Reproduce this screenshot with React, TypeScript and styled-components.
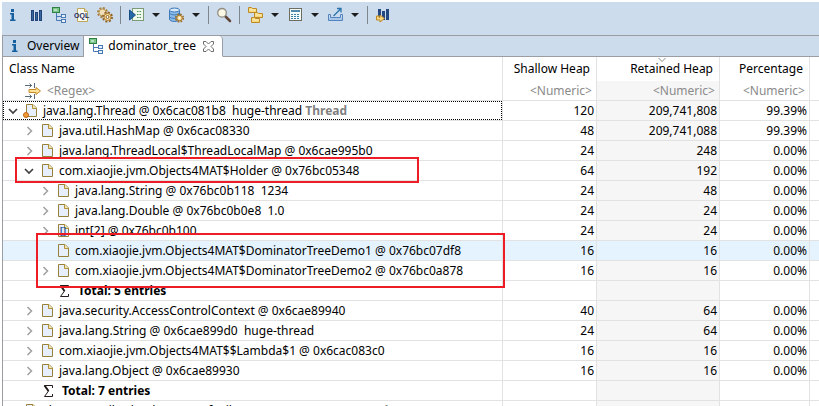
import React from "react";
import styled, { createGlobalStyle, css } from "styled-components";

const GlobalStyle = createGlobalStyle`
  * { box-sizing: border-box; }
  body {
    margin: 0;
    background: #fff;
    color: #000;
    font-family: "Noto Sans", "Open Sans", sans-serif;
    font-size: 12px;
  }
`;

const Window = styled.div`
  display: flex;
  flex-direction: column;
  height: 100vh;
  padding: 2px 0 0 2px;
  overflow: hidden;
`;

const Toolbar = styled.div`
  display: flex;
  flex: none;
  align-items: center;
  gap: 7px;
  height: 33px;
  padding: 0 3px 7px;
  background: #cddcec;
`;

const ToolButton = styled.button<{ $narrow?: boolean }>`
  display: flex;
  flex: none;
  align-items: center;
  justify-content: center;
  width: ${(p) => (p.$narrow ? 10 : 16)}px;
  height: 18px;
  padding: 0;
  border: 0;
  background: none;
`;

const Separator = styled.span`
  width: 1px;
  height: 18px;
  background: #7f858c;
`;

const TabBar = styled.div`
  display: flex;
  flex: none;
  height: 22px;
  border-top: 1px solid #9a9da1;
  border-left: 1px solid #9a9da1;
  background: #cddcec;
`;

const Tab = styled.button<{ $active?: boolean }>`
  display: flex;
  flex: none;
  align-items: center;
  gap: 4px;
  padding: 0 4px;
  border: 0;
  border-right: 1px solid #9a9da1;
  border-bottom: 1px solid #9a9da1;
  background: #c5d6e9;
  color: #000;
  font-family: inherit;
  font-size: 12px;
  line-height: 20px;
  ${(p) =>
    p.$active &&
    css`
      padding-right: 6px;
      border-bottom-color: #fff;
      border-top-right-radius: 4px;
      background: #fff;
    `}
`;

const TabFill = styled.div`
  flex: 1;
  border-bottom: 1px solid #9a9da1;
`;

const Content = styled.div`
  position: relative;
  flex: 1;
  min-height: 0;
  overflow: hidden;
  border-left: 1px solid #9a9da1;
`;

const Table = styled.table`
  width: 100%;
  table-layout: fixed;
  border-collapse: separate;
  border-spacing: 0;
`;

const NumCol = styled.col<{ $width: number }>`
  width: ${(p) => p.$width}px;
`;

const HeadCell = styled.th<{ $left?: boolean }>`
  position: relative;
  height: 24px;
  padding: 0 6px;
  border-right: 1px solid #e2e2e2;
  font-size: 12px;
  font-weight: 400;
  line-height: 24px;
  text-align: ${(p) => (p.$left ? "left" : "right")};
  white-space: nowrap;
`;

const SortMark = styled.svg`
  position: absolute;
  top: 1px;
  left: 50%;
`;

const Cell = styled.td<{ $shaded?: boolean }>`
  height: 20px;
  padding: 0 2px 0 0;
  border-right: 1px solid #e2e2e2;
  border-bottom: 1px solid #e2e2e2;
  background: ${(p) => (p.$shaded ? "#f6f6f6" : "transparent")};
  line-height: 19px;
  text-align: right;
  white-space: nowrap;
`;

const NameCell = styled(Cell)`
  padding: 0;
  text-align: left;
`;

const EndCell = styled(Cell)`
  padding: 0;
  border-right: 0;
`;

const Row = styled.tr<{ $hover?: boolean }>`
  ${(p) =>
    p.$hover &&
    css`
      ${Cell} {
        background: #e5f3ff;
      }
    `}
`;

const NameLine = styled.div<{ $level: number; $focused?: boolean }>`
  display: flex;
  align-items: center;
  height: 19px;
  padding-left: ${(p) => 5 + p.$level * 16}px;
  outline: ${(p) => (p.$focused ? "1px dotted #000" : "none")};
  outline-offset: -1px;
  overflow: hidden;
`;

const Expander = styled.button`
  display: flex;
  flex: none;
  align-items: center;
  width: 10px;
  height: 16px;
  margin-right: 5px;
  padding: 0;
  border: 0;
  background: none;
`;

const ExpanderSpace = styled.span`
  flex: none;
  width: 15px;
`;

const Label = styled.span<{ $total?: boolean }>`
  margin-left: ${(p) => (p.$total ? 7 : 4)}px;
  font-weight: ${(p) => (p.$total ? 700 : 400)};
  white-space: pre;
`;

const Suffix = styled.b`
  color: #7f7f7f;
`;

const FilterLine = styled.div`
  display: flex;
  align-items: center;
  gap: 6px;
  height: 19px;
  padding-left: 22px;
`;

const FilterInput = styled.input<{ $right?: boolean }>`
  display: block;
  width: 100%;
  height: 19px;
  padding: 0 2px 0 0;
  border: 0;
  outline: 0;
  background: transparent;
  font-family: inherit;
  font-size: 12px;
  text-align: ${(p) => (p.$right ? "right" : "left")};
  &::placeholder {
    color: #8a8a8a;
    opacity: 1;
  }
`;

const Marker = styled.div<{ $top: number; $left: number; $width: number; $height: number }>`
  position: absolute;
  top: ${(p) => p.$top}px;
  left: ${(p) => p.$left}px;
  width: ${(p) => p.$width}px;
  height: ${(p) => p.$height}px;
  border: 2px solid #ee1c25;
  pointer-events: none;
`;

const IconSvg = styled.svg`
  flex: none;
  width: 16px;
  height: 16px;
`;

const Icon = ({ children }: { children: React.ReactNode }) => (
  <IconSvg viewBox="0 0 16 16" fill="none" aria-hidden="true">
    {children}
  </IconSvg>
);

const InfoIcon = () => (
  <Icon>
    <path d="M6 2h3v3H6zM5 6h4v6.500h1.500V14H5v-1.500h1.500v-5H5z" fill="#17609f" />
  </Icon>
);

const HistogramIcon = () => (
  <Icon>
    <path d="M3 3h3v11H3zM7 5h3v9H7zM11 3h3v11h-3z" fill="#1f4479" />
    <path d="M4 4h1v9H4zM8 6h1v7H8zM12 4h1v9h-1z" fill="#3a669c" />
  </Icon>
);

const TreeIcon = () => (
  <Icon>
    <path d="M5.500 6v7.500H10M5.500 9.500H10" stroke="#4879b5" />
    <rect x="1.500" y=".5" width="7" height="5" fill="#7cc68c" stroke="#2f8145" />
    <path d="M3 2h3v2H3z" fill="#b5e3be" />
    <rect x="10.500" y="7.500" width="4" height="3" fill="#e7f2fb" stroke="#4879b5" />
    <rect x="10.500" y="12.500" width="4" height="3" fill="#e7f2fb" stroke="#4879b5" />
  </Icon>
);

const OqlIcon = () => (
  <Icon>
    <path d="M3.500 1.500h7l3 3v10h-10z" fill="#fbfaf0" stroke="#bba65c" />
    <path d="M10.500 1.500v3h3" fill="#ead9a0" stroke="#bba65c" />
    <text x="0" y="11" fill="#252c60" fontFamily="Liberation Sans, sans-serif" fontSize="7" fontWeight="700">
      OQL
    </text>
  </Icon>
);

const GearsIcon = () => (
  <Icon>
    <circle cx="5.500" cy="5.500" r="4.500" stroke="#a6803f" strokeWidth="2" strokeDasharray="2 1.500" />
    <circle cx="5.500" cy="5.500" r="3.500" fill="#f0dfb8" stroke="#bb9450" />
    <circle cx="10.500" cy="10" r="4.500" stroke="#8f6429" strokeWidth="2" strokeDasharray="2 1.500" />
    <circle cx="10.500" cy="10" r="3.500" fill="#f5dda1" stroke="#b68234" />
    <circle cx="10.500" cy="10" r="1.500" fill="#fff" stroke="#8f6429" />
  </Icon>
);

const RunReportIcon = () => (
  <Icon>
    <rect x="4.500" y="1.500" width="11" height="12" fill="#eff8ec" stroke="#7a9b74" />
    <path d="M9 4.500h5M9 7.500h5M9 10.500h5" stroke="#4c9257" strokeDasharray="1.500 1" />
    <path d="M1.500 3l6 5-6 5z" fill="#2768a6" stroke="#174f88" />
  </Icon>
);

const DatabaseIcon = () => (
  <Icon>
    <path d="M1.500 3v9c0 1.500 2 2.500 5 2.500s5-1 5-2.500V3" fill="#8bbbe8" stroke="#3d78b8" />
    <ellipse cx="6.500" cy="3" rx="5" ry="2" fill="#d8eafa" stroke="#3d78b8" />
    <path d="M1.500 6c1 2.500 9 2.500 10 0M1.500 9.500c1 2.500 9 2.500 10 0" stroke="#3d78b8" />
    <circle cx="11.500" cy="11" r="3.800" stroke="#9a6c25" strokeWidth="1.600" strokeDasharray="1.700 1.300" />
    <circle cx="11.500" cy="11" r="2.800" fill="#f6d891" stroke="#a87426" />
    <circle cx="11.500" cy="11" r="1" fill="#fff" />
  </Icon>
);

const SearchIcon = () => (
  <Icon>
    <path d="M9.500 9.500l4.500 4.500" stroke="#604738" strokeWidth="2.500" strokeLinecap="round" />
    <circle cx="6" cy="5.800" r="4.300" fill="#fbf8e6" stroke="#928d83" strokeWidth="1.300" />
  </Icon>
);

const FoldersIcon = () => (
  <Icon>
    {[[1, 0], [7, 5], [4, 10]].map(([x, y]) => (
      <g key={x} transform={`translate(${x} ${y})`}>
        <path d="M.5 5.500v-5h3l1 1h4v4z" fill="#f6d77d" stroke="#bc8b28" />
        <path d="M1.500 3h6" stroke="#fff0bd" />
      </g>
    ))}
  </Icon>
);

const CalculatorIcon = () => (
  <Icon>
    <rect x="2.500" y="1.500" width="12" height="12" fill="#f4faf8" stroke="#6e6e60" />
    <path d="M4 3h9v2H4z" fill="#518bab" />
    <path d="M4 7.500h9M4 9.500h9M4 11.500h9" stroke="#3981a8" strokeDasharray="2 1" />
  </Icon>
);

const ExportIcon = () => (
  <Icon>
    <path d="M3.500 7.500h-2v6h14v-6h-2" stroke="#5383bf" />
    <path d="M2 11h13v2H2z" fill="#a9c8e9" />
    <path d="M3.500 7.500v3h10v-3" stroke="#5383bf" />
    <path d="M6.500 9l7-7M10 1.500h4v4" stroke="#2874ae" strokeWidth="1.300" />
  </Icon>
);

const CompareIcon = () => (
  <Icon>
    <path d="M3 2h3v8H3zM7 4h3v9H7zM11 2h3v11h-3z" fill="#244980" />
    <path d="M1.500 9v4H5v2l4.500-3.500L5 8v2.500H4V9z" fill="#f8d883" stroke="#bd8825" />
  </Icon>
);

const FilterIcon = () => (
  <Icon>
    <path d="M0 2.500h7M0 13.500h7M4.500.5l2 2-2 2M4.500 11.500l2 2-2 2M9.500 0v5M9.500 11v5" stroke="#59697c" />
    <path d="M4 6.500h7v-2l4.500 3.500-4.500 3.500v-2H4z" fill="#ffe29a" stroke="#c48a25" />
  </Icon>
);

const ObjectIcon = ({ kind }: { kind?: string }) => (
  <Icon>
    <path d="M3.500 1.500h6.500l3.500 3.500v8.500h-10z" fill="#e6effb" stroke="#97803a" />
    <path d="M9.500 1.500v4h4" fill="#f5e7b2" stroke="#b0923c" />
    {kind === "array" && (
      <text x="5" y="11" fill="#2f5996" fontFamily="Liberation Sans, sans-serif" fontSize="9" fontWeight="700">
        []
      </text>
    )}
    {kind === "root" && <circle cx="3" cy="12" r="2.500" fill="#f39a3a" stroke="#bd6818" />}
  </Icon>
);

const SigmaIcon = () => (
  <Icon>
    <path d="M13.500 5V2.500H5.500L9.500 8l-4 5.500h8V11" stroke="#241a1a" />
    <path d="M5.500 2.500L9.500 8" stroke="#241a1a" strokeWidth="2" />
  </Icon>
);

const CloseIcon = () => (
  <Icon>
    <path
      d="M3.500 3.500h2.500l2.500 2.500 2.500-2.500h2.500V6L11 8.500l2.500 2.500v2.500H11L8.500 11 6 13.500H3.500V11L6 8.500 3.500 6z"
      stroke="#6c6c6c"
    />
  </Icon>
);

const Chevron = ({ open }: { open: boolean }) => (
  <svg width="10" height="10" viewBox="0 0 10 10" fill="none" aria-hidden="true">
    {open ? (
      <path d="M1 3l4 4 4-4" stroke="#404040" strokeWidth="1.700" />
    ) : (
      <path d="M3.500 1L7.500 5l-4 4" stroke="#a0a0a0" strokeWidth="1.500" />
    )}
  </svg>
);

const DropArrow = ({ label }: { label: string }) => (
  <ToolButton $narrow aria-label={label}>
    <svg width="8" height="4" viewBox="0 0 8 4" aria-hidden="true">
      <path d="M0 0h8L4 4z" fill="#1e1e1e" />
    </svg>
  </ToolButton>
);

type Entry = {
  level: number;
  name: string;
  suffix?: string;
  state?: "open" | "closed";
  kind?: "array" | "root" | "total";
  values?: [string, string, string];
  focused?: boolean;
  hover?: boolean;
};

const entries: Entry[] = [
  { level: 0, name: "java.lang.Thread @ 0x6cac081b8  huge-thread ", suffix: "Thread", state: "open", kind: "root", values: ["120", "209,741,808", "99.39%"], focused: true },
  { level: 1, name: "java.util.HashMap @ 0x6cac08330", state: "closed", values: ["48", "209,741,088", "99.39%"] },
  { level: 1, name: "java.lang.ThreadLocal$ThreadLocalMap @ 0x6cae995b0", state: "closed", values: ["24", "248", "0.00%"] },
  { level: 1, name: "com.xiaojie.jvm.Objects4MAT$Holder @ 0x76bc05348", state: "open", values: ["64", "192", "0.00%"] },
  { level: 2, name: "java.lang.String @ 0x76bc0b118  1234", state: "closed", values: ["24", "48", "0.00%"] },
  { level: 2, name: "java.lang.Double @ 0x76bc0b0e8  1.0", state: "closed", values: ["24", "24", "0.00%"] },
  { level: 2, name: "int[2] @ 0x76bc0b100", state: "closed", kind: "array", values: ["24", "24", "0.00%"] },
  { level: 2, name: "com.xiaojie.jvm.Objects4MAT$DominatorTreeDemo1 @ 0x76bc07df8", values: ["16", "16", "0.00%"], hover: true },
  { level: 2, name: "com.xiaojie.jvm.Objects4MAT$DominatorTreeDemo2 @ 0x76bc0a878", state: "closed", values: ["16", "16", "0.00%"] },
  { level: 2, name: "Total: 5 entries", kind: "total" },
  { level: 1, name: "java.security.AccessControlContext @ 0x6cae89940", state: "closed", values: ["40", "64", "0.00%"] },
  { level: 1, name: "java.lang.String @ 0x6cae899d0  huge-thread", state: "closed", values: ["24", "64", "0.00%"] },
  { level: 1, name: "com.xiaojie.jvm.Objects4MAT$$Lambda$1 @ 0x6cac083c0", state: "closed", values: ["16", "16", "0.00%"] },
  { level: 1, name: "java.lang.Object @ 0x6cae89930", state: "closed", values: ["16", "16", "0.00%"] },
  { level: 1, name: "Total: 7 entries", kind: "total" },
  { level: 0, name: "class sun.util.calendar.ZoneInfoFile @ 0x6cac3c8e0 ", suffix: "System Class", state: "closed", kind: "root" },
];

const EntryRow = ({ entry }: { entry: Entry }) => {
  const total = entry.kind === "total";
  const [shallow, retained, percentage] = entry.values ?? ["", "", ""];
  return (
    <Row $hover={entry.hover}>
      <NameCell>
        <NameLine $level={entry.level} $focused={entry.focused}>
          {entry.state ? (
            <Expander aria-label={entry.state === "open" ? "Collapse" : "Expand"}>
              <Chevron open={entry.state === "open"} />
            </Expander>
          ) : (
            <ExpanderSpace />
          )}
          {total ? <SigmaIcon /> : <ObjectIcon kind={entry.kind} />}
          <Label $total={total}>
            {entry.name}
            {entry.suffix && <Suffix>{entry.suffix}</Suffix>}
          </Label>
        </NameLine>
      </NameCell>
      <Cell>{shallow}</Cell>
      <Cell $shaded>{retained}</Cell>
      <Cell>{percentage}</Cell>
      <EndCell />
    </Row>
  );
};

export default function App() {
  return (
    <Window>
      <GlobalStyle />
      <Toolbar role="toolbar">
        <ToolButton aria-label="Overview"><InfoIcon /></ToolButton>
        <ToolButton aria-label="Histogram"><HistogramIcon /></ToolButton>
        <ToolButton aria-label="Dominator tree"><TreeIcon /></ToolButton>
        <ToolButton aria-label="OQL"><OqlIcon /></ToolButton>
        <ToolButton aria-label="Thread overview"><GearsIcon /></ToolButton>
        <Separator />
        <ToolButton aria-label="Run report"><RunReportIcon /></ToolButton>
        <DropArrow label="Report menu" />
        <ToolButton aria-label="Query browser"><DatabaseIcon /></ToolButton>
        <DropArrow label="Query menu" />
        <Separator />
        <ToolButton aria-label="Find"><SearchIcon /></ToolButton>
        <Separator />
        <ToolButton aria-label="Group result"><FoldersIcon /></ToolButton>
        <DropArrow label="Group menu" />
        <ToolButton aria-label="Calculate retained size"><CalculatorIcon /></ToolButton>
        <DropArrow label="Calculate menu" />
        <ToolButton aria-label="Export"><ExportIcon /></ToolButton>
        <DropArrow label="Export menu" />
        <Separator />
        <ToolButton aria-label="Compare"><CompareIcon /></ToolButton>
      </Toolbar>
      <TabBar role="tablist">
        <Tab role="tab"><InfoIcon />Overview</Tab>
        <Tab role="tab" $active aria-selected><TreeIcon />dominator_tree<CloseIcon /></Tab>
        <TabFill />
      </TabBar>
      <Content>
        <Table>
          <colgroup>
            <col />
            <NumCol $width={94} />
            <NumCol $width={123} />
            <NumCol $width={90} />
            <NumCol $width={9} />
          </colgroup>
          <thead>
            <tr>
              <HeadCell $left>Class Name</HeadCell>
              <HeadCell>Shallow Heap</HeadCell>
              <HeadCell>
                <SortMark width="8" height="4" viewBox="0 0 8 4" fill="none" aria-hidden="true">
                  <path d="M.5 0L4 3.500 7.500 0" stroke="#8c8c8c" />
                </SortMark>
                Retained Heap
              </HeadCell>
              <HeadCell>Percentage</HeadCell>
              <td />
            </tr>
          </thead>
          <tbody>
            <Row>
              <NameCell>
                <FilterLine>
                  <FilterIcon />
                  <FilterInput placeholder="<Regex>" aria-label="Class Name filter" />
                </FilterLine>
              </NameCell>
              <Cell><FilterInput $right placeholder="<Numeric>" aria-label="Shallow Heap filter" /></Cell>
              <Cell $shaded><FilterInput $right placeholder="<Numeric>" aria-label="Retained Heap filter" /></Cell>
              <Cell><FilterInput $right placeholder="<Numeric>" aria-label="Percentage filter" /></Cell>
              <EndCell />
            </Row>
            {entries.map((entry) => (
              <EntryRow key={entry.name} entry={entry} />
            ))}
          </tbody>
        </Table>
        <Marker $top={100} $left={12} $width={404} $height={26} />
        <Marker $top={176} $left={33} $width={469} $height={55} />
      </Content>
    </Window>
  );
}
